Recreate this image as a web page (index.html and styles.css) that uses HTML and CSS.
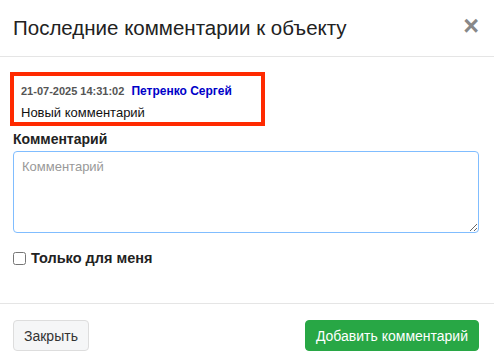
FILE: index.html
```html
<!DOCTYPE html>
<html lang="ru">
<head>
    <meta charset="UTF-8">
    <meta name="viewport" content="width=device-width, initial-scale=1.0">
    <title>Последние комментарии</title>
    <link rel="stylesheet" href="styles.css">
</head>
<body>
    <div class="modal">
        <div class="modal-header">
            <h4 class="modal-title">Последние комментарии к объекту</h4>
            <button class="close-btn" type="button">×</button>
        </div>

        <div class="modal-body">
            <div class="comment highlight">
                <div class="comment-meta">
                    <span class="comment-date">21-07-2025 14:31:02</span>
                    <span class="comment-author">Петренко Сергей</span>
                </div>
                <div class="comment-text">Новый комментарий</div>
            </div>

            <label class="field-label" for="comment">Комментарий</label>
            <textarea id="comment" class="comment-input" placeholder="Комментарий"></textarea>

            <label class="check-row">
                <input type="checkbox" class="check-box">
                <span>Только для меня</span>
            </label>
        </div>

        <div class="modal-footer">
            <button class="btn btn-light" type="button">Закрыть</button>
            <button class="btn btn-success" type="button">Добавить комментарий</button>
        </div>
    </div>
</body>
</html>
```

FILE: styles.css
```css
body {
    margin: 0;
    background: #fff;
    font-family: "Liberation Sans", Arial, sans-serif;
    color: #333;
    overflow: hidden;
}

.modal {
    width: 494px;
}

.modal-header {
    display: flex;
    align-items: center;
    justify-content: space-between;
    height: 56px;
    padding: 0 15px 0 13px;
    border-bottom: 1px solid #e5e5e5;
}

.modal-title {
    margin: 0;
    font-size: 20.5px;
    font-weight: normal;
    color: #222;
}

.close-btn {
    background: none;
    border: none;
    padding: 0;
    font-size: 27px;
    font-weight: bold;
    line-height: 1;
    color: #888;
    cursor: pointer;
    margin-top: -4px;
}

.modal-body {
    padding: 15px 15px 0 13px;
}

.comment {
    width: 240px;
    padding: 7px 0 0 7px;
    height: 39px;
    margin-left: -3px;
}

.highlight {
    border: 4px solid #ff2a00;
}

.comment-meta {
    font-size: 11px;
    font-weight: bold;
    line-height: 16px;
}

.comment-date {
    color: #555;
    margin-right: 4px;
}

.comment-author {
    color: #0000c8;
    font-size: 12px;
}

.comment-text {
    margin-top: 6px;
    font-size: 13px;
    line-height: 16px;
    color: #111;
}

.field-label {
    display: block;
    margin-top: 3px;
    font-size: 14px;
    font-weight: bold;
    line-height: 20px;
    color: #222;
}

.comment-input {
    display: block;
    box-sizing: border-box;
    width: 100%;
    height: 82px;
    margin-top: 2px;
    padding: 6px 8px;
    border: 1px solid #80bdff;
    border-radius: 4px;
    font-family: inherit;
    font-size: 13px;
    line-height: 18px;
    color: #333;
    resize: vertical;
    outline: none;
}

.comment-input::placeholder {
    color: #999;
}

.check-row {
    display: flex;
    align-items: center;
    gap: 5px;
    margin-top: 17px;
    height: 16px;
    font-size: 14.5px;
    font-weight: bold;
    color: #222;
}

.check-box {
    width: 13px;
    height: 13px;
    margin: 0;
}

.modal-footer {
    display: flex;
    justify-content: space-between;
    margin-top: 37px;
    padding: 16px 15px 0 13px;
    border-top: 1px solid #e5e5e5;
}

.btn {
    height: 31px;
    padding: 0 10px;
    border-radius: 4px;
    font-family: inherit;
    font-size: 14px;
    cursor: pointer;
}

.btn-light {
    background: #f5f6f7;
    border: 1px solid #ddd;
    color: #333;
}

.btn-success {
    background: #28a745;
    border: 1px solid #28a745;
    color: #fff;
}
```
